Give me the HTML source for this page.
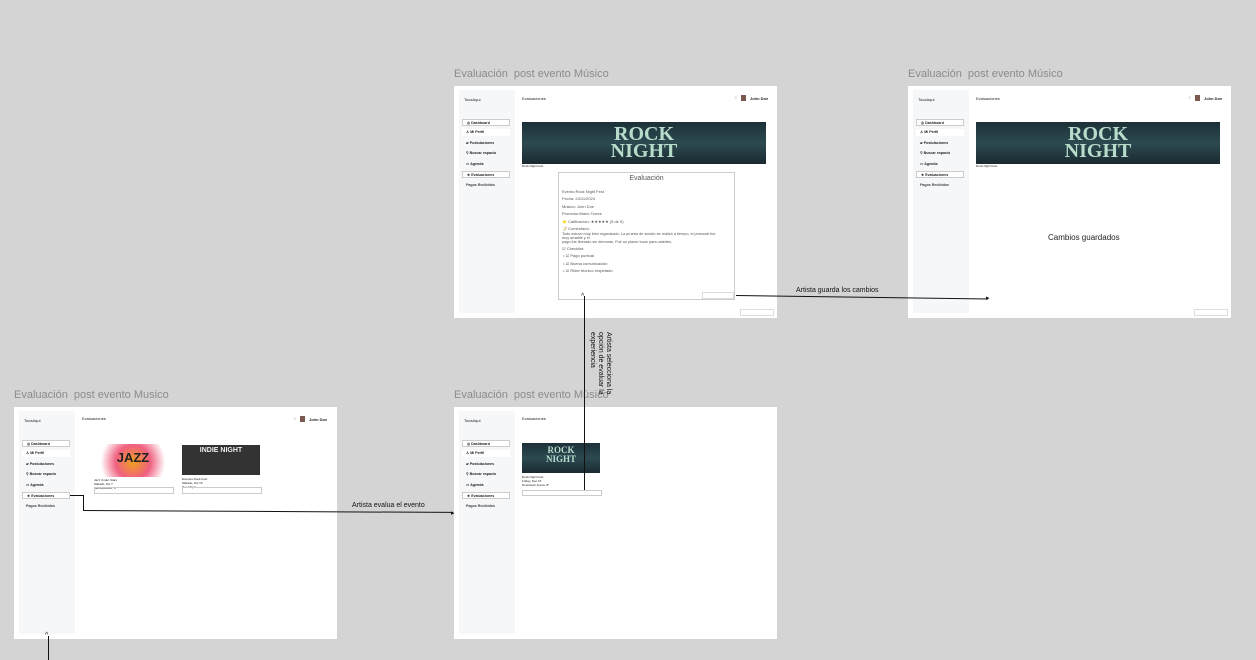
<!DOCTYPE html><html><head><meta charset="utf-8"><style>
body{margin:0;width:1256px;height:660px;background:#d4d4d4;position:relative;overflow:hidden;font-family:"Liberation Sans",sans-serif}
.lbl{position:absolute;font-size:11px;color:#8b8b8b}
.fr{position:absolute;width:323px;height:232px;background:#fff}
.sb{position:absolute;left:5px;top:4px;width:56px;height:223px;background:#f6f7f8}
.t{position:absolute;font-size:4px;color:#222;white-space:nowrap}
.it{position:absolute;left:3px;width:48px;height:7px;font-size:3.6px;line-height:7px;padding-left:4px;box-sizing:border-box;color:#222;font-weight:bold}
.it.b{border:0.6px solid #ccc;background:#fff}
.it.w{background:#fff}
.av{position:absolute;width:5px;height:6px;background:#7a5a50}
.rock{position:absolute;background:linear-gradient(180deg,#1d3038,#2c4a50 50%,#1a2a30);color:#b8dccc;font-weight:bold;text-align:center;font-family:"Liberation Serif",serif;overflow:hidden}
.ln{position:absolute;background:#111}
</style></head><body>
<div class="lbl" style="left:454px;top:68px">Evaluación &nbsp;post evento Músico</div>
<div class="lbl" style="left:908px;top:68px">Evaluación &nbsp;post evento Músico</div>
<div class="lbl" style="left:14px;top:389px">Evaluación &nbsp;post evento Musico</div>
<div class="lbl" style="left:454px;top:389px">Evaluación &nbsp;post evento Músico</div>

<!-- Frame A -->
<div class="fr" style="left:454px;top:86px">
<div class="sb"><div class="t" style="left:5px;top:7px">TocaAqui</div>
<div class="it b" style="top:29px">◎ Dashboard</div><div class="it w" style="top:39px">♙ Mi Perfil</div><div class="it" style="top:50px">▰ Postulaciones</div><div class="it" style="top:60px">⚲ Buscar espacio</div><div class="it" style="top:71px">▭ Agenda</div><div class="it b" style="top:81px">★ Evaluaciones</div><div class="it" style="top:92px;color:#444">Pagos Recibidos</div></div>
<div class="t" style="left:68px;top:10px">Evaluaciones</div>
<div class="t" style="left:280px;top:9px">♢</div><div class="av" style="left:287px;top:9px"></div><div class="t" style="left:296px;top:10px;font-weight:bold">John Doe</div>
<div class="rock" style="left:68px;top:36px;width:244px;height:42px"><div style="font-size:20px;line-height:18px;margin-top:3px">ROCK</div><div style="font-size:20px;line-height:16px">NIGHT</div></div>
<div class="t" style="left:68px;top:78px;font-size:3px">Rock Night Fest</div>
<div style="position:absolute;left:104px;top:86px;width:177px;height:128px;border:0.7px solid #ccc;box-sizing:border-box">
<div style="position:absolute;left:0;right:0;top:2px;text-align:center;font-size:7px;color:#555">Evaluación</div>
<div class="t" style="left:3px;top:15px;color:#555;font-size:4px;line-height:7.4px">Evento:Rock Night Fest<br>Fecha: 24/11/2024<br>Músico: John Doe<br>Promotor:Mario Torres<br>⭐ Calificación: ★★★★★ (5 de 5)<br>📝 Comentario:</div>
<div class="t" style="left:3px;top:59px;color:#555;font-size:3.8px;line-height:4px">Todo estuvo muy bien organizado. La prueba de sonido se realizó a tiempo, el personal fue<br>muy amable y el<br>pago fue liberado sin demoras. Fue un placer tocar para ustedes.</div>
<div class="t" style="left:3px;top:72px;color:#555;line-height:7.4px">☑ Checklist:<br>&nbsp;• ☑ Pago puntual<br>&nbsp;• ☑ Buena comunicación<br>&nbsp;• ☑ Rider técnico respetado</div>
<div style="position:absolute;left:143px;top:119px;width:30px;height:5px;border:0.5px solid #ddd"></div></div>
<div style="position:absolute;left:286px;top:223px;width:32px;height:5px;border:0.5px solid #ddd"></div>
</div>

<!-- Frame B -->
<div class="fr" style="left:908px;top:86px">
<div class="sb"><div class="t" style="left:5px;top:7px">TocaAqui</div>
<div class="it b" style="top:29px">◎ Dashboard</div><div class="it w" style="top:39px">♙ Mi Perfil</div><div class="it" style="top:50px">▰ Postulaciones</div><div class="it" style="top:60px">⚲ Buscar espacio</div><div class="it" style="top:71px">▭ Agenda</div><div class="it b" style="top:81px">★ Evaluaciones</div><div class="it" style="top:92px;color:#444">Pagos Recibidos</div></div>
<div class="t" style="left:68px;top:10px">Evaluaciones</div>
<div class="t" style="left:280px;top:9px">♢</div><div class="av" style="left:287px;top:9px"></div><div class="t" style="left:296px;top:10px;font-weight:bold">John Doe</div>
<div class="rock" style="left:68px;top:36px;width:244px;height:42px"><div style="font-size:20px;line-height:18px;margin-top:3px">ROCK</div><div style="font-size:20px;line-height:16px">NIGHT</div></div>
<div class="t" style="left:68px;top:78px;font-size:3px">Rock Night Fest</div>
<div class="t" style="left:140px;top:147px;font-size:8px">Cambios guardados</div>
<div style="position:absolute;left:286px;top:223px;width:32px;height:5px;border:0.5px solid #ddd"></div>
</div>

<!-- Frame C -->
<div class="fr" style="left:14px;top:407px">
<div class="sb"><div class="t" style="left:5px;top:7px">TocaAqui</div>
<div class="it b" style="top:29px">◎ Dashboard</div><div class="it w" style="top:39px">♙ Mi Perfil</div><div class="it" style="top:50px">▰ Postulaciones</div><div class="it" style="top:60px">⚲ Buscar espacio</div><div class="it" style="top:71px">▭ Agenda</div><div class="it b" style="top:81px">★ Evaluaciones</div><div class="it" style="top:92px;color:#444">Pagos Recibidos</div></div>
<div class="t" style="left:68px;top:9px">Evaluaciones</div>
<div class="t" style="left:279px;top:9px">♢</div><div class="av" style="left:286px;top:9px"></div><div class="t" style="left:295px;top:10px;font-weight:bold">John Doe</div>
<div style="position:absolute;left:80px;top:37px;width:78px;height:33px;background:radial-gradient(circle at 50% 55%,#f0a020 0,#f06080 40%,#fff 75%);text-align:center;font-weight:bold;font-size:13px;color:#222;line-height:28px">JAZZ</div>
<div class="t" style="left:80px;top:71px;font-size:3px">Jazz Under Stars<br>Sábado, Dic 7<br>Metropolitano, 8°</div>
<div style="position:absolute;left:80px;top:80px;width:78px;height:5px;border:0.5px solid #ccc"></div>
<div style="position:absolute;left:168px;top:38px;width:78px;height:30px;background:#333;color:#eee;font-weight:bold;font-size:7px;text-align:center;line-height:12px">INDIE NIGHT</div>
<div class="t" style="left:168px;top:70px;font-size:3px">Eventos Rock Fest<br>Sábado, Dic 15<br>Dec 15 jun</div>
<div style="position:absolute;left:168px;top:80px;width:78px;height:5px;border:0.5px solid #ccc"></div>
</div>

<!-- Frame D -->
<div class="fr" style="left:454px;top:407px">
<div class="sb"><div class="t" style="left:5px;top:7px">TocaAqui</div>
<div class="it b" style="top:29px">◎ Dashboard</div><div class="it w" style="top:39px">♙ Mi Perfil</div><div class="it" style="top:50px">▰ Postulaciones</div><div class="it" style="top:60px">⚲ Buscar espacio</div><div class="it" style="top:71px">▭ Agenda</div><div class="it b" style="top:81px">★ Evaluaciones</div><div class="it" style="top:92px;color:#444">Pagos Recibidos</div></div>
<div class="t" style="left:68px;top:9px">Evaluaciones</div>
<div class="rock" style="left:68px;top:36px;width:78px;height:30px"><div style="font-size:9px;line-height:10px;margin-top:2px">ROCK</div><div style="font-size:9px;line-height:8px">NIGHT</div></div>
<div class="t" style="left:68px;top:68px;font-size:3px">Rock Night Fest<br>Friday, Dec 15<br>Downtown Arena, 8°</div>
<div style="position:absolute;left:68px;top:83px;width:78px;height:4px;border:0.5px solid #ccc"></div>
</div>

<!-- arrows -->
<div class="ln" style="left:584px;top:296px;width:1px;height:194px"></div>
<div class="t" style="left:581px;top:293px;font-size:7px">^</div>
<div class="t" style="left:588px;top:332px;font-size:7px;color:#111;writing-mode:vertical-rl;line-height:8px;white-space:normal;height:70px">Artista selecciona la opción de evaluar la experiencia</div>
<div class="ln" style="left:736px;top:295px;width:252px;height:1px;transform:rotate(0.8deg);transform-origin:left"></div>
<div class="t" style="left:986px;top:294px;font-size:7px;color:#111">▸</div>
<div class="t" style="left:796px;top:287px;font-size:7px;color:#111">Artista guarda los cambios</div>
<div class="ln" style="left:70px;top:495px;width:13px;height:1px"></div>
<div class="ln" style="left:83px;top:495px;width:1px;height:15px"></div>
<div class="ln" style="left:83px;top:510px;width:370px;height:1px;transform:rotate(0.3deg);transform-origin:left"></div>
<div class="t" style="left:451px;top:509px;font-size:7px;color:#111">▸</div>
<div class="t" style="left:352px;top:502px;font-size:7px;color:#111">Artista evalua el evento</div>
<div class="ln" style="left:48px;top:636px;width:1px;height:24px"></div>
<div class="t" style="left:45px;top:632px;font-size:7px">^</div>
</body></html>
